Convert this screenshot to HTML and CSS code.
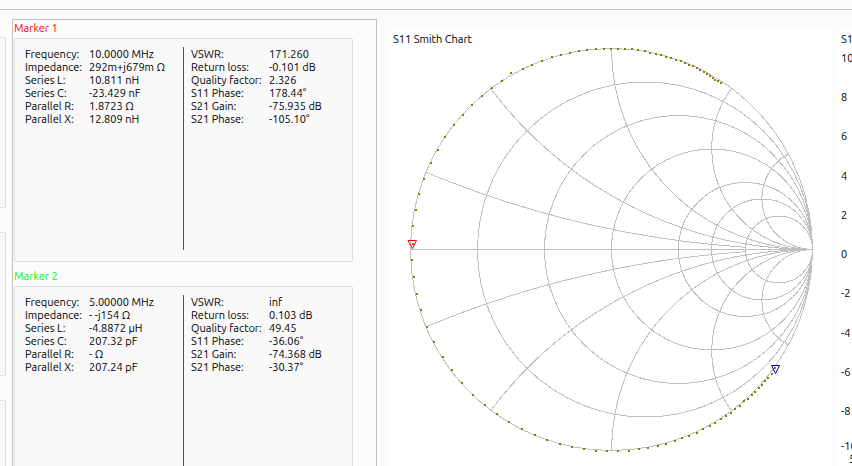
FILE: index.html
```html
<!DOCTYPE html>
<html lang="en">
<head>
<meta charset="utf-8">
<title>NanoVNA markers</title>
<link rel="stylesheet" href="styles.css">
</head>
<body>
<div class="window">
  <aside class="controls"><div class="box box-a"></div><div class="box box-b"></div><div class="box box-c"></div></aside>
  <main class="markers">
    <section class="marker">
      <h2 class="red">Marker 1</h2>
      <div class="panel">
        <table>
          <tr><th scope="row">Frequency:</th><td>10.0000 MHz</td></tr>
          <tr><th scope="row">Impedance:</th><td>292m+j679m Ω</td></tr>
          <tr><th scope="row">Series L:</th><td>10.811 nH</td></tr>
          <tr><th scope="row">Series C:</th><td>-23.429 nF</td></tr>
          <tr><th scope="row">Parallel R:</th><td>1.8723 Ω</td></tr>
          <tr><th scope="row">Parallel X:</th><td>12.809 nH</td></tr>
        </table>
        <table class="right">
          <tr><th scope="row">VSWR:</th><td>171.260</td></tr>
          <tr><th scope="row">Return loss:</th><td>-0.101 dB</td></tr>
          <tr><th scope="row">Quality factor:</th><td>2.326</td></tr>
          <tr><th scope="row">S11 Phase:</th><td>178.44°</td></tr>
          <tr><th scope="row">S21 Gain:</th><td>-75.935 dB</td></tr>
          <tr><th scope="row">S21 Phase:</th><td>-105.10°</td></tr>
        </table>
      </div>
    </section>
    <section class="marker">
      <h2 class="green">Marker 2</h2>
      <div class="panel">
        <table>
          <tr><th scope="row">Frequency:</th><td>5.00000 MHz</td></tr>
          <tr><th scope="row">Impedance:</th><td>- -j154 Ω</td></tr>
          <tr><th scope="row">Series L:</th><td>-4.8872 µH</td></tr>
          <tr><th scope="row">Series C:</th><td>207.32 pF</td></tr>
          <tr><th scope="row">Parallel R:</th><td>- Ω</td></tr>
          <tr><th scope="row">Parallel X:</th><td>207.24 pF</td></tr>
        </table>
        <table class="right">
          <tr><th scope="row">VSWR:</th><td>inf</td></tr>
          <tr><th scope="row">Return loss:</th><td>0.103 dB</td></tr>
          <tr><th scope="row">Quality factor:</th><td>49.45</td></tr>
          <tr><th scope="row">S11 Phase:</th><td>-36.06°</td></tr>
          <tr><th scope="row">S21 Gain:</th><td>-74.368 dB</td></tr>
          <tr><th scope="row">S21 Phase:</th><td>-30.37°</td></tr>
        </table>
      </div>
    </section>
  </main>
  <section class="chart">
    <h2>S11 Smith Chart</h2>
    <svg viewBox="390 47 442 408" role="img" aria-label="S11 Smith Chart">
      <g class="grid" shape-rendering="crispEdges">
        <circle cx="611.5" cy="249.5" r="201"/>
        <circle cx="645" cy="249.5" r="167.5"/>
        <circle cx="678.5" cy="249.5" r="134"/>
        <circle cx="712" cy="249.5" r="100.5"/>
        <circle cx="745.5" cy="249.5" r="67"/>
        <circle cx="762" cy="249.5" r="50.5"/>
        <circle cx="779" cy="249.5" r="33.5"/>
        <path d="M410.500 249.500H812.500"/>
        <path d="M425.900 172.200A1005 1005 0 0 0 745.500 247.300M425.900 326.800A1005 1005 0 0 1 745.500 251.700"/>
        <path d="M490.900 88.700A402 402 0 0 0 812.500 249.500A402 402 0 0 0 490.900 410.300"/>
        <path d="M611.500 48.500A201 201 0 0 0 812.500 249.500A201 201 0 0 0 611.500 450.500"/>
        <path d="M731.500 88.500A101 101 0 0 0 812.500 249.500A101 101 0 0 0 731.500 410.500"/>
        <path d="M788 154A51 51 0 0 0 812.500 249.500A51 51 0 0 0 788 345"/>
      </g>
      <path class="sweep" shape-rendering="crispEdges" d="M412 244h2M412 226h2M415 210h2M418 194h2M423 179h2M430 163h2M437 150h2M444 137h2M453 125h2M462 115h2M471 105h2M481 96h2M491 88h2M501 81h2M510 73h2M522 69h2M531 65h2M541 61h2M551 57h2M560 55h2M569 53h2M578 51h2M586 50h2M595 49h2M603 49h2M610 49h2M617 49h2M624 49h2M631 49h2M637 50h2M644 51h2M649 53h2M655 54h2M660 55h2M665 57h2M670 58h2M675 60h2M680 61h2M684 63h2M688 65h2M692 66h2M696 68h2M699 70h2M703 72h2M706 74h2M709 76h2M712 78h2M714 80h2M717 81h2M720 83h2M411 260h2M413 277h2M416 294h2M420 310h2M426 327h2M433 342h2M442 357h2M451 370h2M461 383h2M472 395h2M484 405h2M496 414h2M508 422h2M521 429h2M534 435h2M546 440h2M559 444h2M571 447h2M583 449h2M595 451h2M606 451h2M617 451h2M628 451h2M638 449h2M647 448h2M657 446h2M665 444h2M674 441h2M681 438h2M688 436h2M696 433h2M702 429h2M709 426h2M714 423h2M720 419h2M725 416h2M730 413h2M734 409h2M739 406h2M743 401h2M747 399h2M751 395h2M754 392h2M758 388h2M761 385h2M764 381h2M767 378h2M771 374h2M774 368h2"/>
      <path class="pin red" d="M408 240.500h8.500L412.500 248.500Z"/>
      <path class="pin blue" d="M771.500 365.500h8L775.500 373.500Z"/>
    </svg>
  </section>
  <section class="next">
    <h2>S11</h2>
    <ol><li>10</li><li>8</li><li>6</li><li>4</li><li>2</li><li>0</li><li>-2</li><li>-4</li><li>-6</li><li>-8</li></ol>
    <div class="last">-10</div>
    <span class="tick">5</span>
  </section>
</div>
</body>
</html>
```
FILE: styles.css
```css
* { box-sizing: border-box; }
body {
  margin: 0;
  padding-top: 9px;
  background: #fcfcfc;
  color: #000;
  font: 11px/13px Ubuntu, "Noto Sans", sans-serif;
  overflow: hidden;
}
.window {
  display: flex;
  height: calc(100vh - 9px);
  border-top: 1px solid #c0c0c0;
  overflow: hidden;
}
h2 { margin: 0; font: inherit; }
.red { color: #f00; }
.green { color: #0f0; }
.controls {
  flex: 0 0 6px;
  display: flex;
  flex-direction: column;
  gap: 24px;
  margin-right: 6px;
  padding-top: 27px;
}
.box {
  flex: none;
  border: 1px solid #dcdcdc;
  border-left: 0;
  border-radius: 0 2px 2px 0;
  background: #f9f9f9;
}
.box-a { height: 171px; }
.box-b { height: 144px; }
.box-c { height: 100px; }
.markers {
  flex: 0 0 365px;
  margin-top: 9px;
  padding: 2px 23px 0 1px;
  border: 1px solid #c0c0c0;
  border-bottom: 0;
  overflow: hidden;
}
.marker { margin-bottom: 8px; }
.marker h2 { height: 16px; }
.panel {
  display: flex;
  height: 224px;
  padding: 8px 10px 11px;
  border: 1px solid #dcdcdc;
  border-radius: 2px;
  background: #f9f9f9;
}
table { flex: none; align-self: flex-start; border-collapse: collapse; white-space: nowrap; }
.panel table { width: 158px; margin-top: 1px; }
th, td { padding: 0; font-weight: normal; text-align: left; }
th { width: 64px; }
.panel::before { content: ""; order: 1; width: 1px; background: #555; }
.panel .right { order: 2; width: 140px; margin-left: 7px; }
.right th { width: 78px; }
.chart {
  flex: 1 1 442px;
  margin: 18px 6px 0 13px;
  padding: 5px 0 0;
  background: #fff;
}
.chart h2 { padding-left: 3px; height: 14px; }
.chart svg { display: block; width: 100%; }
.grid { fill: none; stroke: #c0c0c0; }
.sweep { stroke: #808000; stroke-width: 2; }
.pin { fill: none; stroke: currentColor; }
.blue { color: #00c; }
.next {
  flex: 0 0 14px;
  margin-top: 18px;
  padding: 5px 0 0 3px;
  background: #fff;
  overflow: hidden;
  white-space: nowrap;
}
.next ol {
  display: flex;
  flex-direction: column;
  justify-content: space-between;
  height: 366px;
  margin: 6px 0 0;
  padding: 0;
  list-style: none;
}
.last { margin-top: 22px; }
.tick { display: block; padding-left: 8px; }
```
